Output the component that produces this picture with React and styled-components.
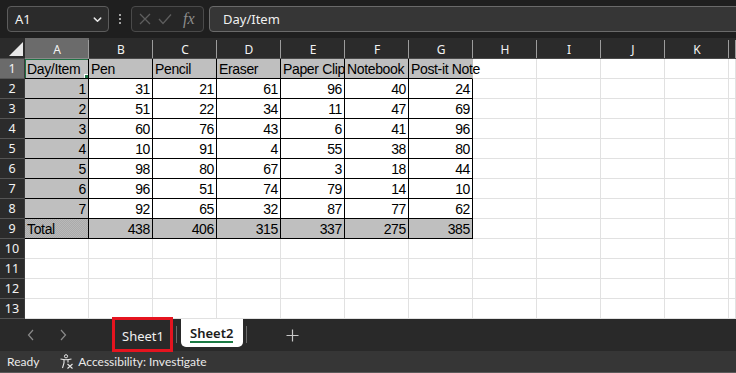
import React from "react";
import styled, { createGlobalStyle } from "styled-components";

const Global = createGlobalStyle`
  html, body { margin: 0; padding: 0; background: #1f1f1f; overflow: hidden; }
  #root { width: 736px; height: 373px; }
  * { box-sizing: border-box; }
`;

const Page = styled.div`
  width: 736px;
  height: 373px;
  display: flex;
  flex-direction: column;
  font-family: "Noto Sans", "Open Sans", sans-serif;
  overflow: hidden;
`;

/* ---------- top bar ---------- */
const TopBar = styled.div`
  height: 38px;
  flex: none;
  background: #1f1f1f;
  display: flex;
  align-items: flex-start;
  padding: 6px 0 0 7px;
`;

const NameBox = styled.div`
  width: 102px;
  height: 26px;
  border: 1px solid #5c5c5c;
  border-radius: 4px;
  background: #2b2b2b;
  color: #f2f2f2;
  font-size: 13px;
  display: flex;
  align-items: center;
  justify-content: space-between;
  padding: 0 5px 0 7px;
`;

const Dots = styled.div`
  width: 22px;
  height: 26px;
  display: flex;
  flex-direction: column;
  align-items: center;
  justify-content: center;
  gap: 2px;
  span { width: 2px; height: 2px; background: #d0d0d0; border-radius: 1px; }
`;

const FxBox = styled.div`
  width: 73px;
  height: 26px;
  border: 1px solid #4a4a4a;
  border-radius: 4px;
  background: #262626;
  display: flex;
  align-items: center;
  padding: 0 4px 0 7px;
  gap: 7px;
`;

const Fx = styled.span`
  font-family: "Liberation Serif", serif;
  font-style: italic;
  font-size: 16px;
  color: #8c8c8c;
  margin-left: 4px;
`;

const Formula = styled.div`
  flex: 1;
  margin-left: 5px;
  margin-right: -4px;
  height: 26px;
  border: 1px solid #6a6a6a;
  border-radius: 4px;
  background: #363636;
  color: #f0f0f0;
  font-size: 13px;
  display: flex;
  align-items: center;
  padding-left: 13px;
`;

/* ---------- grid ---------- */
const Grid = styled.div`
  display: grid;
  grid-template-columns: 25px repeat(11, 64px) 1fr;
  grid-template-rows: 21px repeat(13, 20px);
  background: #ffffff;
  flex: none;
`;

const Corner = styled.div`
  background: #2b2b2b;
  border-bottom: 1px solid #4a4a4a;
  display: flex;
  align-items: flex-end;
  justify-content: flex-end;
  padding: 0 2px 2px 0;
`;

const ColHead = styled.div`
  position: relative;
  background: ${p => (p.$selected ? "#6b6b6b" : "#2b2b2b")};
  border-bottom: 1px solid ${p => (p.$selected ? "#8a8a8a" : "#4a4a4a")};
  color: #f3f3f3;
  font-size: 12px;
  display: flex;
  align-items: center;
  justify-content: center;
  padding-top: 2px;
  &::after {
    content: "";
    position: absolute;
    right: 0;
    top: 2px;
    bottom: 0;
    width: 1px;
    background: #9c9c9c;
  }
`;

const RowHead = styled.div`
  background: ${p => (p.$selected ? "#6b6b6b" : "#2b2b2b")};
  border-bottom: 1px solid #555555;
  border-right: 1px solid #3a3a3a;
  color: #f3f3f3;
  font-size: 12.5px;
  display: flex;
  align-items: center;
  justify-content: center;
`;

const fills = {
  white: "#ffffff",
  gray: "#bfbfbf",
  pattern: "repeating-conic-gradient(#ababab 0 25%, #b9b9b9 0 50%) 0 0 / 2px 2px",
};

const Cell = styled.div`
  position: relative;
  border-right: 1px solid
    ${p => (p.$noRight ? "transparent" : p.$black ? "#000000" : "#e1e1e1")};
  border-bottom: 1px solid ${p => (p.$black ? "#000000" : "#e1e1e1")};
  background: ${p => fills[p.$fill || "white"]};
  font-family: "Liberation Sans", Arial, sans-serif;
  font-size: 14px;
  letter-spacing: -0.35px;
  color: #000;
  display: flex;
  align-items: flex-end;
  justify-content: ${p => (p.$num ? "flex-end" : "flex-start")};
  padding: 0 2px 1px 2px;
  line-height: 16px;
  white-space: nowrap;
  overflow: ${p => (p.$overflow ? "visible" : "hidden")};
  z-index: ${p => (p.$overflow ? 2 : 0)};
`;

const Selection = styled.div`
  position: absolute;
  left: -1px;
  top: -1px;
  right: -2px;
  bottom: -2px;
  border: 2px solid #1f7244;
  pointer-events: none;
  z-index: 3;
  &::after {
    content: "";
    position: absolute;
    right: -4px;
    bottom: -4px;
    width: 6px;
    height: 6px;
    background: #1f7244;
    border: 1px solid #ffffff;
  }
`;

/* ---------- tabs ---------- */
const TabBar = styled.div`
  position: relative;
  height: 32px;
  flex: none;
  background: #292929;
  display: flex;
  align-items: flex-start;
`;

const Nav = styled.div`
  width: 112px;
  height: 32px;
  display: flex;
  align-items: center;
  padding-left: 27px;
  gap: 24px;
  color: #8a8a8a;
`;

const Tab = styled.div`
  position: relative;
  height: ${p => (p.$active ? "28px" : "32px")};
  padding: 0 10px 0 ${p => (p.$active ? "9px" : "10px")};
  width: ${p => (p.$active ? "62px" : "60px")};
  background: ${p => (p.$active ? "#ffffff" : "transparent")};
  border-radius: ${p => (p.$active ? "0 0 5px 5px" : "0")};
  color: ${p => (p.$active ? "#1b1b1b" : "#f0f0f0")};
  font-weight: ${p => (p.$active ? 600 : 400)};
  font-size: 13px;
  display: flex;
  align-items: center;
  padding-top: ${p => (p.$active ? "0" : "1px")};
`;

const Underline = styled.div`
  position: absolute;
  left: 9px;
  right: 10px;
  bottom: 4px;
  height: 2px;
  background: #1b7a44;
`;

const Sep = styled.div`
  width: 1px;
  height: 17px;
  margin: 7px ${p => p.$r || 4}px 0 ${p => p.$l || 4}px;
  background: #6a6a6a;
`;

const Plus = styled.div`
  margin-left: 35px;
  height: 32px;
  display: flex;
  align-items: center;
  color: #c8c8c8;
`;

const Annot = styled.div`
  position: absolute;
  left: 112px;
  top: -2px;
  width: 61px;
  height: 35px;
  border: 3px solid #e5141f;
  pointer-events: none;
  z-index: 5;
`;

/* ---------- status ---------- */
const Status = styled.div`
  height: 22px;
  flex: none;
  background: #363636;
  border-bottom: 1px solid #5a5a5a;
  color: #eaeaea;
  font-family: Lato, "Liberation Sans", sans-serif;
  font-size: 12px;
  display: flex;
  align-items: center;
  padding-left: 7px;
`;

const A11y = styled.div`
  margin-left: 20px;
  display: flex;
  align-items: center;
  gap: 4px;
`;

const cols = ["A", "B", "C", "D", "E", "F", "G", "H", "I", "J", "K", ""];
const headers = ["Day/Item", "Pen", "Pencil", "Eraser", "Paper Clip", "Notebook", "Post-it Note"];
const data = [
  [1, 31, 21, 61, 96, 40, 24],
  [2, 51, 22, 34, 11, 47, 69],
  [3, 60, 76, 43, 6, 41, 96],
  [4, 10, 91, 4, 55, 38, 80],
  [5, 98, 80, 67, 3, 18, 44],
  [6, 96, 51, 74, 79, 14, 10],
  [7, 92, 65, 32, 87, 77, 62],
];
const totals = ["Total", 438, 406, 315, 337, 275, 385];

function renderRow(r) {
  const cells = [];
  for (let c = 0; c < 12; c++) {
    const key = `${r}-${c}`;
    if (c < 7 && r <= 9) {
      if (r === 1) {
        cells.push(
          <Cell key={key} $black $fill="gray" $noRight={c === 6} $overflow={c === 6}>
            {headers[c]}
            {c === 0 && <Selection />}
          </Cell>
        );
      } else if (r === 9) {
        cells.push(
          <Cell key={key} $black $fill={c === 0 ? "pattern" : "gray"} $num={c > 0}>
            {totals[c]}
          </Cell>
        );
      } else {
        cells.push(
          <Cell key={key} $black $fill={c === 0 ? "gray" : "white"} $num>
            {data[r - 2][c]}
          </Cell>
        );
      }
    } else {
      cells.push(<Cell key={key} />);
    }
  }
  return cells;
}

export default function App() {
  const rows = [];
  for (let r = 1; r <= 13; r++) {
    rows.push(
      <RowHead key={`rh${r}`} $selected={r === 1}>
        {r}
      </RowHead>
    );
    rows.push(...renderRow(r));
  }

  return (
    <Page>
      <Global />
      <TopBar>
        <NameBox>
          <span>A1</span>
          <svg width="11" height="11" viewBox="0 0 12 12">
            <path d="M2.5 4.5 L6 8 L9.5 4.5" fill="none" stroke="#e6e6e6" strokeWidth="1.6" strokeLinecap="round" strokeLinejoin="round" />
          </svg>
        </NameBox>
        <Dots>
          <span />
          <span />
          <span />
        </Dots>
        <FxBox>
          <svg width="12" height="12" viewBox="0 0 12 12">
            <path d="M1 1 L11 11 M11 1 L1 11" stroke="#5e5e5e" strokeWidth="1.3" />
          </svg>
          <svg width="14" height="12" viewBox="0 0 14 12">
            <path d="M1 6 L5 10.5 L13 1.5" fill="none" stroke="#5e5e5e" strokeWidth="1.3" />
          </svg>
          <Fx>fx</Fx>
        </FxBox>
        <Formula>Day/Item</Formula>
      </TopBar>

      <Grid>
        <Corner>
          <svg width="14" height="14" viewBox="0 0 14 14">
            <path d="M14 0 L14 14 L0 14 Z" fill="#e8e8e8" />
          </svg>
        </Corner>
        {cols.map((c, i) => (
          <ColHead key={`ch${i}`} $selected={c === "A"}>
            {c}
          </ColHead>
        ))}
        {rows}
      </Grid>

      <TabBar>
        <Nav>
          <svg width="8" height="12" viewBox="0 0 8 12">
            <path d="M6 1 L1.5 6 L6 11" fill="none" stroke="#8a8a8a" strokeWidth="1.2" />
          </svg>
          <svg width="8" height="12" viewBox="0 0 8 12">
            <path d="M2 1 L6.5 6 L2 11" fill="none" stroke="#8a8a8a" strokeWidth="1.2" />
          </svg>
        </Nav>
        <Tab>Sheet1</Tab>
        <Sep $l={4} $r={4} />
        <Tab $active>
          Sheet2
          <Underline />
        </Tab>
        <Sep $l={3} $r={0} />
        <Plus>
          <svg width="13" height="13" viewBox="0 0 13 13">
            <path d="M6.5 0.5 V12.5 M0.5 6.5 H12.5" stroke="#c8c8c8" strokeWidth="1.2" />
          </svg>
        </Plus>
        <Annot />
      </TabBar>

      <Status>
        <span>Ready</span>
        <A11y>
          <svg width="15" height="15" viewBox="0 0 15 15">
            <circle cx="7" cy="2.3" r="1.6" fill="none" stroke="#e6e6e6" strokeWidth="1" />
            <path d="M1.5 5 Q7 6.5 12.5 5" fill="none" stroke="#e6e6e6" strokeWidth="1.1" />
            <path d="M5 6 L5 9 L3.5 14 M9 6 L9 8.5" fill="none" stroke="#e6e6e6" strokeWidth="1.1" />
            <path d="M8.5 10 L13.5 14.5 M13.5 10 L8.5 14.5" stroke="#e6e6e6" strokeWidth="1.1" />
          </svg>
          <span>Accessibility: Investigate</span>
        </A11y>
      </Status>
    </Page>
  );
}
